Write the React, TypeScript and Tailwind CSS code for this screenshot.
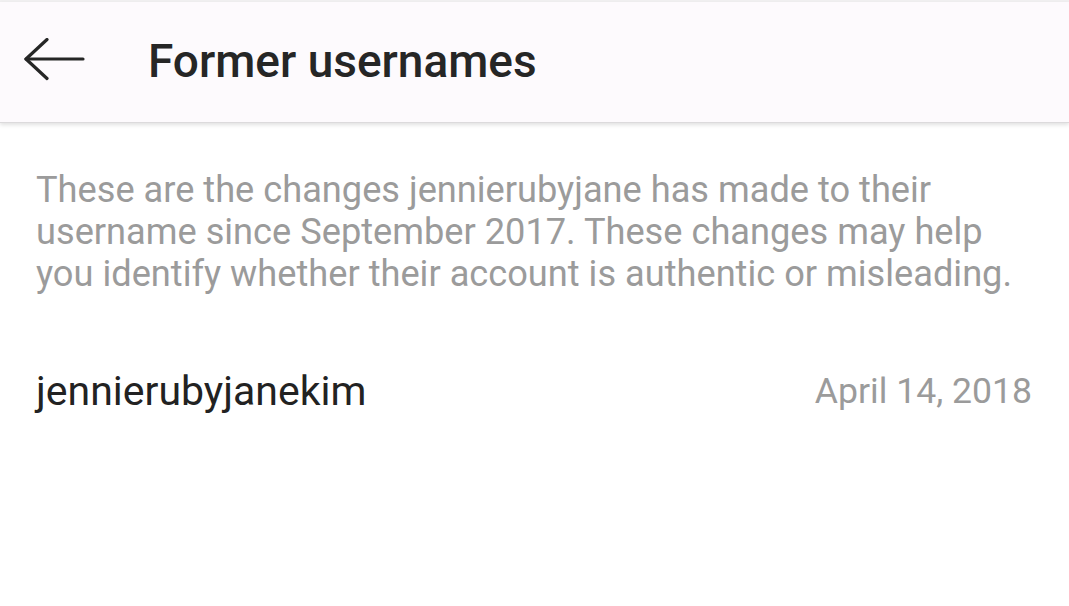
import React from "react";

export default function App() {
  return (
    <div className="w-[1069px] h-[606px] bg-white overflow-hidden" style={{ fontFamily: "Roboto, 'Noto Sans', sans-serif" }}>
      <div className="h-[2px] bg-[#f1f0f1]" />
      <div className="relative h-[121px] bg-[#fdfafd] flex items-center shadow-[0_2px_4px_rgba(0,0,0,0.12)] border-b border-[#dcdadc]">
        <div className="w-[148px] pl-[22px] flex items-center -mt-[2px]">
          <svg width="66" height="46" viewBox="0 0 66 46" fill="none">
            <path d="M4 21 H61" stroke="#262626" strokeWidth="3.2" strokeLinecap="round" />
            <path d="M25 1.5 L4 21 L25 40.5" stroke="#262626" strokeWidth="3.2" strokeLinecap="round" strokeLinejoin="round" />
          </svg>
        </div>
        <div className="text-[46px] font-medium text-[#262626] leading-none -mt-[2px]">Former usernames</div>
      </div>
      <div className="px-[36px] pt-[46px]">
        <p className="text-[36.2px] leading-[42px] text-[#9b9b9b]">
          These are the changes jennierubyjane has made to their username since September 2017. These changes may help you identify whether their account is authentic or misleading.
        </p>
        <div className="flex justify-between items-center mt-[72px] pr-[1px]">
          <span className="text-[41px] leading-[48px] text-[#222222]">jennierubyjanekim</span>
          <span className="text-[35.6px] leading-[48px] text-[#9b9b9b]">April 14, 2018</span>
        </div>
      </div>
    </div>
  );
}
